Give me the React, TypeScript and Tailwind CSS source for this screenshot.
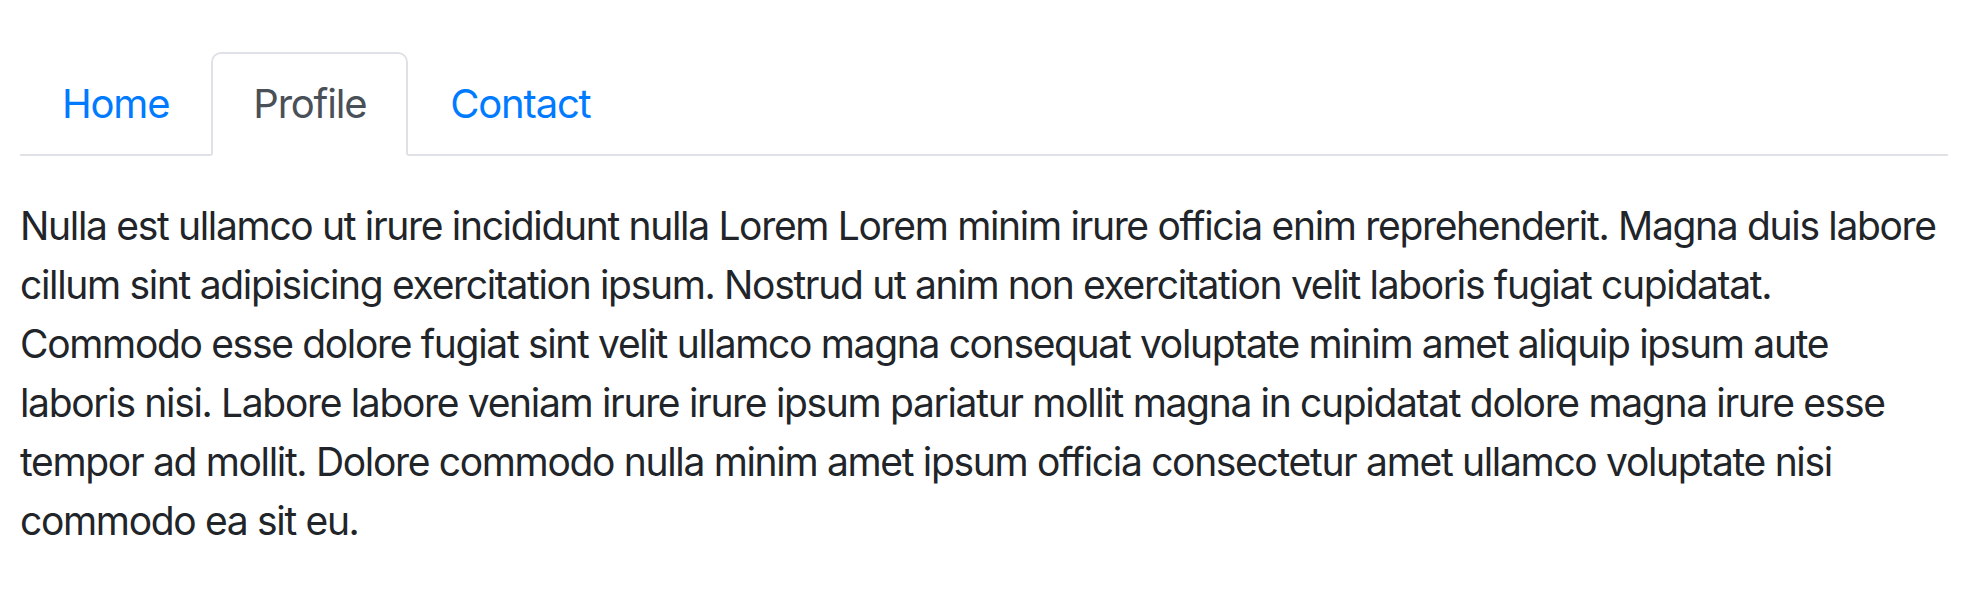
const tabs = [
    { label: 'Home', active: false },
    { label: 'Profile', active: true },
    { label: 'Contact', active: false },
];

export default function App() {
    return (
        <div className="min-h-screen bg-white px-5 pt-[52px] font-['Inter',sans-serif] text-[#212529]">
            {/* Tabs */}
            <ul className="flex border-b-2 border-[#dee2e6] text-[40px] leading-[60px] tracking-[-0.03em]">
                {tabs.map((tab) => (
                    <li key={tab.label} className="-mb-[2px]">
                        <a
                            href="#"
                            className={[
                                'block rounded-t-[10px] border-2 px-10 py-5',
                                tab.active
                                    ? 'border-[#dee2e6] border-b-white bg-white text-[#495057]'
                                    : 'border-transparent text-[#007bff]',
                            ].join(' ')}
                        >
                            {tab.label}
                        </a>
                    </li>
                ))}
            </ul>

            {/* Tab content */}
            <p className="mt-10 text-[39px] leading-[59px] tracking-[-0.034em]">
                Nulla est ullamco ut irure incididunt nulla Lorem Lorem minim irure officia enim reprehenderit. Magna
                duis labore cillum sint adipisicing exercitation ipsum. Nostrud ut anim non exercitation velit laboris
                fugiat cupidatat. Commodo esse dolore fugiat sint velit ullamco magna consequat voluptate minim amet
                aliquip ipsum aute laboris nisi. Labore labore veniam irure irure ipsum pariatur mollit magna in
                cupidatat dolore magna irure esse tempor ad mollit. Dolore commodo nulla minim amet ipsum officia
                consectetur amet ullamco voluptate nisi commodo ea sit eu.
            </p>
        </div>
    );
}
